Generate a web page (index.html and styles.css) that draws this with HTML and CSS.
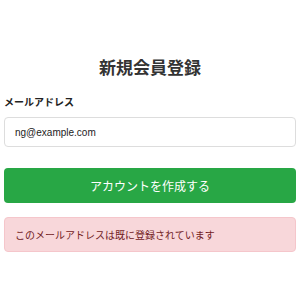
FILE: index.html
```html
<!DOCTYPE html>
<html lang="ja">
<head>
    <meta charset="UTF-8">
    <meta name="viewport" content="width=device-width, initial-scale=1.0">
    <title>新規会員登録</title>
    <link rel="stylesheet" href="styles.css">
</head>
<body>

    <!-- Register Form -->
    <div class="register-container">
        <h1>新規会員登録</h1>
        <form>
            <label for="email">メールアドレス</label>
            <input type="email" id="email" value="ng@example.com">
            <button type="button">アカウントを作成する</button>
        </form>
        <div class="alert-error">このメールアドレスは既に登録されています</div>
    </div>

</body>
</html>
```

FILE: styles.css
```css
body {
    font-family: "Liberation Sans", "Noto Sans CJK JP", sans-serif;
    background-color: #fff;
    margin: 0;
    padding: 0;
}

.register-container {
    padding: 57px 4px 0;
}

h1 {
    font-size: 17px;
    line-height: 24px;
    color: #333;
    text-align: center;
    margin: 0 0 15px;
}

label {
    display: block;
    font-size: 10px;
    font-weight: bold;
    line-height: 14px;
    color: #222;
    margin-bottom: 7px;
}

input {
    display: block;
    width: 100%;
    height: 30px;
    padding: 0 10px;
    font-family: "Liberation Sans", sans-serif;
    font-size: 10px;
    color: #222;
    border: 1px solid #ddd;
    border-radius: 4px;
    box-sizing: border-box;
    margin: 0;
}

button {
    display: block;
    width: 100%;
    height: 35px;
    margin-top: 21px;
    background-color: #28a745;
    color: #fff;
    font-family: "Liberation Sans", "Noto Sans CJK JP", sans-serif;
    font-size: 12px;
    border: none;
    border-radius: 4px;
    cursor: pointer;
}

.alert-error {
    display: flex;
    align-items: center;
    height: 35px;
    margin-top: 14px;
    padding: 0 10px;
    font-size: 10px;
    color: #721c24;
    background-color: #f8d7da;
    border: 1px solid #f5c6cb;
    border-radius: 4px;
    box-sizing: border-box;
}
```
